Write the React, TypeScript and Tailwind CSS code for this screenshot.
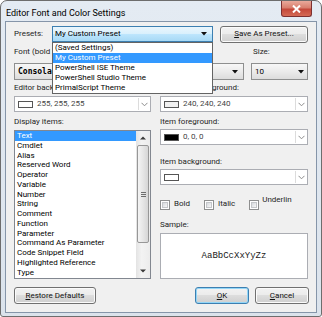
import React from 'react';

const presets = ['(Saved Settings)', 'My Custom Preset', 'PowerShell ISE Theme', 'PowerShell Studio Theme', 'PrimalScript Theme'];

const displayItems = [
  'Text',
  'Cmdlet',
  'Alias',
  'Reserved Word',
  'Operator',
  'Variable',
  'Number',
  'String',
  'Comment',
  'Function',
  'Parameter',
  'Command As Parameter',
  'Code Snippet Field',
  'Highlighted Reference',
  'Type',
];

const Chevron = () => (
  <svg width="7" height="5" viewBox="0 0 7 5">
    <path d="M0.5 0.8 L3.5 3.8 L6.5 0.8" fill="none" stroke="#8c8c8c" strokeWidth="1" />
  </svg>
);

const DownTriangle = () => (
  <svg width="6" height="4" viewBox="0 0 6 4">
    <path d="M0 0 H6 L3 3.5 Z" fill="#111" />
  </svg>
);

const ScrollArrow = ({ up }: { up?: boolean }) => (
  <svg width="6" height="4" viewBox="0 0 6 4">
    <path d={up ? 'M0 3.5 H6 L3 0.5 Z' : 'M0 0.5 H6 L3 3.5 Z'} fill="#3a3a3a" />
  </svg>
);

const Label = ({ children, className = '' }: { children: React.ReactNode; className?: string }) => (
  <div className={`h-[10px] whitespace-nowrap text-[8px] leading-[10px] text-[#1e1e1e] ${className}`}>{children}</div>
);

const WinButton = ({
  children,
  focused = false,
  className = '',
}: {
  children: React.ReactNode;
  focused?: boolean;
  className?: string;
}) => (
  <div
    className={`flex h-[17px] items-center justify-center rounded-[3px] border bg-[linear-gradient(to_bottom,#f2f2f2_0%,#ebebeb_50%,#dddddd_50%,#cfcfcf_100%)] text-[8px] leading-none text-[#111] ${
      focused ? 'border-[#3c7fb1] shadow-[inset_0_0_0_1px_#93d6f7]' : 'border-[#707070] shadow-[inset_0_0_0_1px_#fbfbfb]'
    } ${className}`}
  >
    {children}
  </div>
);

const ColorCombo = ({ swatch, value }: { swatch: string; value: string }) => (
  <div className="flex h-[16px] items-center border border-[#abadb3] bg-white">
    <div className={`ml-[3px] h-[7px] w-[15px] border border-[#555] ${swatch}`} />
    <span className="ml-[4px] text-[8px] leading-none text-[#444]">{value}</span>
    <div className="ml-auto mr-[1px] flex h-[12px] w-[11px] items-center justify-center border-l border-[#dcdcdc]">
      <Chevron />
    </div>
  </div>
);

const Checkbox = () => (
  <div className="h-[10px] w-[10px] border border-[#8e8f8f] bg-white p-[1px]">
    <div className="h-full w-full border border-[#c4c6c9] bg-[linear-gradient(135deg,#d6d9dd,#f7f7f7)]" />
  </div>
);

export default function App() {
  return (
    <div className="h-[317px] w-[322px] bg-white font-[Roboto,'Noto_Sans',sans-serif]">
      <div className="flex h-[317px] w-[322px] flex-col rounded-t-[7px] rounded-b-[3px] border border-[#6d6d6d] bg-[linear-gradient(to_bottom,#e4ebf3,#dbe3ec)]">
        {/* title bar */}
        <div className="flex h-[20px] items-start">
          <div className="pl-[5px] pt-[7px] text-[9px] leading-[10px] text-black">Editor Font and Color Settings</div>
          <div className="ml-auto mr-[9px] flex h-[16px] w-[31px] items-center justify-center rounded-b-[3px] border border-t-0 border-[#7d3131] bg-[linear-gradient(to_bottom,#e9a99b_0%,#d87f6e_45%,#c4483a_55%,#d46a55_100%)]">
            <svg width="9" height="8" viewBox="0 0 9 8">
              <path d="M1 0.5 L8 7.5 M8 0.5 L1 7.5" stroke="#fff" strokeWidth="2" />
            </svg>
          </div>
        </div>

        {/* client area */}
        <div className="mx-[4px] mb-[3px] flex-1 border border-[#8595a9] bg-[#f0f0f0] pl-[8px] pr-[7px] pt-[4px]">
          {/* presets row */}
          <div className="flex h-[16px] items-center">
            <Label className="w-[38px]">Presets:</Label>
            <div className="relative w-[161px]">
              <div className="flex h-[16px] items-center border border-[#3c7fb1] bg-[linear-gradient(to_bottom,#eaf6fd_0%,#d9f0fc_50%,#bee6fd_50%,#a7d9f5_100%)] pl-[2px] pr-[5px]">
                <span className="text-[8px] leading-none text-black">My Custom Preset</span>
                <div className="ml-auto">
                  <DownTriangle />
                </div>
              </div>
              <div className="absolute left-0 top-[16px] z-10 w-[161px] border border-[#646464] bg-white py-[0px]">
                {presets.map((p, i) => (
                  <div
                    key={p}
                    className={`h-[10px] pl-[2px] text-[8px] leading-[10px] ${
                      i === 1 ? 'bg-[#3399ff] text-white' : 'text-black'
                    }`}
                  >
                    {p}
                  </div>
                ))}
              </div>
            </div>
            <WinButton className="ml-[7px] h-[16px] w-[88px]">
              <span className="underline">S</span>ave As Preset...
            </WinButton>
          </div>

          {/* font labels */}
          <div className="mt-[5px] flex">
            <Label className="flex-1">Font (bold = fixed width):</Label>
            <Label className="w-[57px] pl-[1px]">Size:</Label>
          </div>

          {/* font combos */}
          <div className="mt-[6px] flex gap-[7px]">
            <div className="flex h-[17px] w-[230px] items-center border border-[#8e8f8f] bg-[linear-gradient(to_bottom,#f7f7f7,#ebebeb_50%,#dcdcdc)] pl-[3px] pr-[5px]">
              <span className="font-['DejaVu_Sans_Mono',monospace] text-[8px] font-bold leading-none text-black">Consolas</span>
              <div className="ml-auto">
                <DownTriangle />
              </div>
            </div>
            <div className="flex h-[17px] w-[57px] items-center border border-[#8e8f8f] bg-[linear-gradient(to_bottom,#f7f7f7,#ebebeb_50%,#dcdcdc)] pl-[3px] pr-[3px]">
              <span className="text-[8px] leading-none text-black">10</span>
              <div className="ml-auto">
                <DownTriangle />
              </div>
            </div>
          </div>

          {/* two column area */}
          <div className="mt-[3px] grid grid-cols-[137px_148px] gap-x-[9px]">
            <div className="flex flex-col">
              <Label>Editor background:</Label>
              <div className="mt-[3px]">
                <ColorCombo swatch="bg-white" value="255, 255, 255" />
              </div>
              <Label className="mt-[5px]">Display items:</Label>
              <div className="mt-[3px] flex h-[149px] border border-[#828790] bg-white">
                <div className="flex-1">
                  {displayItems.map((item, i) => (
                    <div
                      key={item}
                      className={`h-[9.77px] pl-[2px] text-[8px] leading-[9.77px] ${
                        i === 0 ? 'bg-[#3399ff] text-white' : 'text-black'
                      }`}
                    >
                      {item}
                    </div>
                  ))}
                </div>
                <div className="flex w-[14px] flex-col bg-[linear-gradient(to_right,#e3e3e3,#f3f3f3_40%,#ececec)]">
                  <div className="flex h-[14px] items-center justify-center">
                    <ScrollArrow up />
                  </div>
                  <div className="mx-[1px] flex h-[98px] items-center justify-center rounded-[2px] border border-[#979797] bg-[linear-gradient(to_right,#f4f4f4,#e6e6e6_50%,#d6d6d6)]">
                    <div className="flex flex-col gap-[1px]">
                      <div className="h-[1px] w-[5px] bg-[#6e6e6e]" />
                      <div className="h-[1px] w-[5px] bg-[#6e6e6e]" />
                      <div className="h-[1px] w-[5px] bg-[#6e6e6e]" />
                    </div>
                  </div>
                  <div className="flex-1" />
                  <div className="flex h-[14px] items-center justify-center">
                    <ScrollArrow />
                  </div>
                </div>
              </div>
            </div>

            <div className="flex flex-col">
              <Label>Selection background:</Label>
              <div className="mt-[3px]">
                <ColorCombo swatch="bg-[#f0f0f0]" value="240, 240, 240" />
              </div>
              <Label className="mt-[5px]">Item foreground:</Label>
              <div className="mt-[2px]">
                <ColorCombo swatch="bg-black" value="0, 0, 0" />
              </div>
              <Label className="mt-[12px]">Item background:</Label>
              <div className="mt-[2px]">
                <ColorCombo swatch="bg-white" value="" />
              </div>
              <div className="mt-[15px] flex h-[10px] items-start">
                <Checkbox />
                <Label className="ml-[4px] mt-[-1px]">Bold</Label>
                <div className="ml-[14px]">
                  <Checkbox />
                </div>
                <Label className="ml-[4px] mt-[-1px]">Italic</Label>
                <div className="ml-[14px]">
                  <Checkbox />
                </div>
                <Label className="ml-[3px] mt-[-5px]">Underlin</Label>
              </div>
              <Label className="mt-[10px]">Sample:</Label>
              <div className="mt-[3px] flex h-[46px] items-center justify-center border border-[#abadb3] bg-white">
                <span className="font-['Liberation_Mono',monospace] text-[9px] leading-none text-[#1a1a1a]">AaBbCcXxYyZz</span>
              </div>
            </div>
          </div>

          {/* buttons */}
          <div className="mt-[8px] flex">
            <WinButton className="w-[82px]">
              <span className="underline">R</span>estore Defaults
            </WinButton>
            <WinButton focused className="ml-auto w-[54px]">
              <span className="underline">O</span>K
            </WinButton>
            <WinButton className="ml-[6px] w-[54px]">
              <span className="underline">C</span>ancel
            </WinButton>
          </div>
        </div>
      </div>
    </div>
  );
}
